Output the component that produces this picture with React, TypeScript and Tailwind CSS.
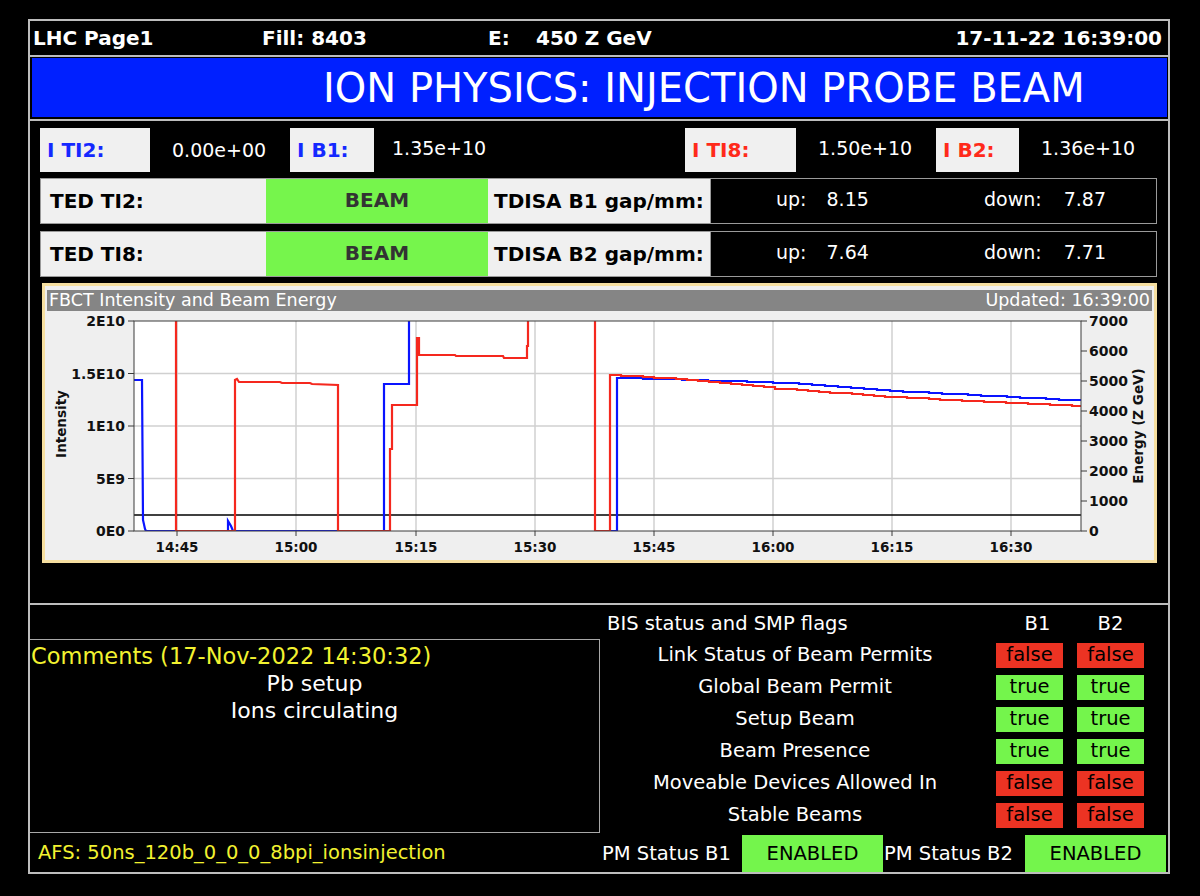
import React from 'react'

type Pt = [number, number]

const PLOT = { l: 134, r: 1081, t: 322, b: 532 }
const GRID_X = [177, 296, 416, 535, 654, 773, 892, 1011]
const TIME_LABELS = ['14:45', '15:00', '15:15', '15:30', '15:45', '16:00', '16:15', '16:30']
const INT_LABELS = ['2E10', '1.5E10', '1E10', '5E9', '0E0']
const NRG_LABELS = ['7000', '6000', '5000', '4000', '3000', '2000', '1000', '0']

// slow stepped decay between control points
function stepDecay(ctrl: Pt[], dx: number): Pt[] {
  const out: Pt[] = [ctrl[0]]
  let last = ctrl[0][1]
  const end = ctrl[ctrl.length - 1][0]
  for (let x = ctrl[0][0] + dx; x < end; x += dx) {
    const i = ctrl.findIndex(p => p[0] >= x)
    const [x0, y0] = ctrl[i - 1]
    const [x1, y1] = ctrl[i]
    const y = Math.round(y0 + ((x - x0) / (x1 - x0)) * (y1 - y0))
    if (y !== last) {
      out.push([x, last], [x, y])
      last = y
    }
  }
  out.push([end, last])
  return out
}

const blueA: Pt[] = [
  [134, 381], [142, 381], [143, 521], [145, 530], [146, 532], [228, 532], [228, 522], [231, 527], [233, 532],
  [384, 532], [384, 385], [409, 385], [409, 290],
]
const blueB: Pt[] = [
  [596, 532], [617, 532],
  ...stepDecay([[617, 379], [690, 381], [780, 384], [890, 392], [1010, 398], [1081, 402]], 13),
]

const red: Pt[] = [
  [134, 290], [176, 290], [176, 532], [235, 532], [235, 381], [237, 380], [239, 383], [280, 383], [282, 384],
  [310, 384], [312, 385], [338, 386], [338, 532], [390, 532], [390, 450], [392, 450], [392, 406], [417, 406],
  [417, 339], [419, 339], [419, 356], [455, 356], [456, 357], [503, 357], [504, 359], [527, 359], [527, 347],
  [528, 347], [528, 290], [595, 290], [595, 532], [610, 532],
  ...stepDecay([[610, 376], [690, 381], [780, 390], [890, 398], [1010, 404], [1081, 407]], 11),
]

const toPath = (pts: Pt[]) => pts.map((p, i) => `${i ? 'L' : 'M'}${p[0]} ${p[1]}`).join(' ')

function Chart() {
  return (
    <svg width={1109} height={249} viewBox="45 312 1109 249" className="block font-['DejaVu_Sans',sans-serif]">
      <defs>
        <clipPath id="plot">
          <rect x={PLOT.l} y={PLOT.t} width={PLOT.r - PLOT.l} height={PLOT.b - PLOT.t} />
        </clipPath>
      </defs>
      <rect x={PLOT.l} y={PLOT.t} width={PLOT.r - PLOT.l} height={PLOT.b - PLOT.t} fill="#ffffff" />
      {[374.5, 427, 479.5].map(y => (
        <line key={y} x1={PLOT.l} x2={PLOT.r} y1={y} y2={y} stroke="#d0d0d0" strokeWidth={1.5} />
      ))}
      {GRID_X.map(x => (
        <line key={x} x1={x} x2={x} y1={PLOT.t} y2={PLOT.b} stroke="#d0d0d0" strokeWidth={1.5} />
      ))}
      <line x1={PLOT.l} x2={PLOT.r} y1={516} y2={516} stroke="#000" strokeWidth={1.5} />
      <g clipPath="url(#plot)" fill="none" strokeWidth={2.2}>
        <path d={`${toPath(blueA)} ${toPath(blueB)}`} stroke="#0a14ff" />
        <path d={toPath(red)} stroke="#f5281e" />
      </g>
      <rect x={PLOT.l} y={PLOT.t} width={PLOT.r - PLOT.l} height={PLOT.b - PLOT.t} fill="none" stroke="#3a3a3a" strokeWidth={1} />

      {INT_LABELS.map((t, i) => {
        const y = PLOT.t + i * 52.5
        return (
          <g key={t}>
            <line x1={128} x2={PLOT.l} y1={y} y2={y} stroke="#3a3a3a" />
            <text x={125} y={y + 5} textAnchor="end" fontSize={14} fontWeight={700} fill="#111">{t}</text>
          </g>
        )
      })}
      {NRG_LABELS.map((t, i) => {
        const y = PLOT.t + i * 30
        return (
          <g key={t}>
            <line x1={PLOT.r} x2={PLOT.r + 6} y1={y} y2={y} stroke="#3a3a3a" />
            <text x={1089} y={y + 5} fontSize={14} fontWeight={700} fill="#111">{t}</text>
          </g>
        )
      })}
      {GRID_X.map((x, i) => (
        <g key={x}>
          <line x1={x} x2={x} y1={PLOT.b} y2={PLOT.b + 5} stroke="#3a3a3a" />
          <text x={x} y={553} textAnchor="middle" fontSize={13.5} fontWeight={700} fill="#111">{TIME_LABELS[i]}</text>
        </g>
      ))}
      <text x={62} y={425} transform="rotate(-90 62 425)" textAnchor="middle" dominantBaseline="middle" fontSize={13.5} fontWeight={700} fill="#111">Intensity</text>
      <text x={1139} y={427} transform="rotate(-90 1139 427)" textAnchor="middle" dominantBaseline="middle" fontSize={13.5} fontWeight={700} fill="#111">Energy (Z GeV)</text>
    </svg>
  )
}

function IntLabel({ text, w, red }: { text: string; w: number; red?: boolean }) {
  return (
    <div
      className={`h-full bg-[#f0f0f0] flex items-center pl-[7px] text-[20px] font-bold ${red ? 'text-[#ff2a1a]' : 'text-[#1428ff]'}`}
      style={{ width: w }}
    >
      {text}
    </div>
  )
}

function TedRow({ ted, tdisa, up, down }: { ted: string; tdisa: string; up: string; down: string }) {
  return (
    <div className="ml-[10px] w-[1117px] h-[46px] border border-[#9a9a9a] flex text-[20px]">
      <div className="w-[225px] bg-[#f0f0f0] flex items-center pl-[9px] font-bold text-black">{ted}</div>
      <div className="w-[222px] bg-[#76f54c] flex items-start justify-center pt-[6px] font-bold text-[#333]">BEAM</div>
      <div className="w-[222px] bg-[#f0f0f0] flex items-center pl-[6px] font-bold text-black">{tdisa}</div>
      <div className="flex-1 bg-black border-l border-[#9a9a9a] flex items-start pt-[6px] text-[19px] text-white">
        <div className="w-[223px] pl-[65px] flex">
          <span>up:</span>
          <span className="ml-[20px]">{up}</span>
        </div>
        <div className="flex pl-[50px]">
          <span>down:</span>
          <span className="ml-[22px]">{down}</span>
        </div>
      </div>
    </div>
  )
}

const FLAGS: { label: string; v: boolean }[] = [
  { label: 'Link Status of Beam Permits', v: false },
  { label: 'Global Beam Permit', v: true },
  { label: 'Setup Beam', v: true },
  { label: 'Beam Presence', v: true },
  { label: 'Moveable Devices Allowed In', v: false },
  { label: 'Stable Beams', v: false },
]

function Badge({ v }: { v: boolean }) {
  return (
    <div className={`w-[67px] h-[25px] flex items-center justify-center text-[19.5px] text-black ${v ? 'bg-[#74f54c]' : 'bg-[#ec3323]'}`}>
      {v ? 'true' : 'false'}
    </div>
  )
}

export default function App() {
  return (
    <div className="w-[1200px] h-[896px] bg-black overflow-hidden font-['DejaVu_Sans',sans-serif] pt-[19px] pl-[28px]">
      <div className="w-[1142px] h-[855px] border-2 border-[#bdbdbd] flex flex-col">
        {/* header */}
        <div className="h-[36px] border-b-2 border-[#bdbdbd] flex items-center pl-[3px] pr-[6px] text-[20px] font-bold text-white">
          <span className="w-[229px]">LHC Page1</span>
          <span className="w-[226px]">Fill: 8403</span>
          <span className="w-[48px]">E:</span>
          <span>450 Z GeV</span>
          <span className="ml-auto">17-11-22 16:39:00</span>
        </div>

        {/* title */}
        <div className="h-[64px] border-b-2 border-[#bdbdbd] pt-[1px] pb-[2px] pl-[2px] pr-[1px]">
          <div className="h-full bg-[#0020ff] flex items-center pl-[291px] text-[40px] text-white leading-none">
            ION PHYSICS: INJECTION PROBE BEAM
          </div>
        </div>

        {/* main */}
        <div className="h-[484px] border-b-2 border-[#bdbdbd] flex flex-col pt-[7px]">
          <div className="h-[44px] flex pl-[10px] text-[19px] text-white">
            <IntLabel text="I TI2:" w={110} />
            <div className="w-[140px] pl-[22px] pt-[8px]">0.00e+00</div>
            <IntLabel text="I B1:" w={84} />
            <div className="w-[311px] pl-[18px] pt-[6px]">1.35e+10</div>
            <IntLabel text="I TI8:" w={111} red />
            <div className="w-[140px] pl-[22px] pt-[6px]">1.50e+10</div>
            <IntLabel text="I B2:" w={83} red />
            <div className="pl-[22px] pt-[6px]">1.36e+10</div>
          </div>
          <div className="mt-[6px]">
            <TedRow ted="TED TI2:" tdisa="TDISA B1 gap/mm:" up="8.15" down="7.87" />
          </div>
          <div className="mt-[7px]">
            <TedRow ted="TED TI8:" tdisa="TDISA B2 gap/mm:" up="7.64" down="7.71" />
          </div>
          <div className="mt-[6px] ml-[12px] w-[1115px] h-[280px] border-[3px] border-[#f6dfa0] bg-[#efefef] flex flex-col">
            <div className="mt-[4px] mx-[2px] h-[21px] bg-[#858585] flex items-center justify-between px-[2px] text-[17.5px] text-white">
              <span>FBCT Intensity and Beam Energy</span>
              <span>Updated: 16:39:00</span>
            </div>
            <Chart />
          </div>
        </div>

        {/* bottom */}
        <div className="flex-1 flex">
          <div className="w-[570px] flex flex-col">
            <div className="h-[34px]" />
            <div className="h-[194px] border-y border-r border-[#a8a8a8] text-[22px] pt-[2px]">
              <div className="pl-[1px] leading-[28px] text-[22.5px] text-[#f2f230]">Comments (17-Nov-2022 14:30:32)</div>
              <div className="text-center leading-[27px] text-white">
                <div>Pb setup</div>
                <div>Ions circulating</div>
              </div>
            </div>
            <div className="flex-1 flex items-center pl-[8px] text-[19.5px] text-[#f2f230]">AFS: 50ns_120b_0_0_0_8bpi_ionsinjection</div>
          </div>
          <div className="flex-1 flex flex-col text-[19.5px] text-white">
            <div className="h-[34px] flex items-center pt-[4px]">
              <div className="w-[396px] pl-[7px]">BIS status and SMP flags</div>
              <div className="w-[67px] pl-[16px] text-center">B1</div>
              <div className="w-[67px] ml-[14px] text-center">B2</div>
            </div>
            {FLAGS.map(f => (
              <div key={f.label} className="h-[32px] flex items-center">
                <div className="w-[390px] text-center">{f.label}</div>
                <div className="ml-[6px]"><Badge v={f.v} /></div>
                <div className="ml-[14px]"><Badge v={f.v} /></div>
              </div>
            ))}
            <div className="mt-[4px] flex-1 flex items-stretch">
              <div className="w-[142px] pl-[2px] flex items-center">PM Status B1</div>
              <div className="w-[141px] bg-[#74f54c] text-black flex items-center justify-center">ENABLED</div>
              <div className="w-[142px] pl-[1px] flex items-center">PM Status B2</div>
              <div className="w-[141px] bg-[#74f54c] text-black flex items-center justify-center">ENABLED</div>
            </div>
          </div>
        </div>
      </div>
    </div>
  )
}
